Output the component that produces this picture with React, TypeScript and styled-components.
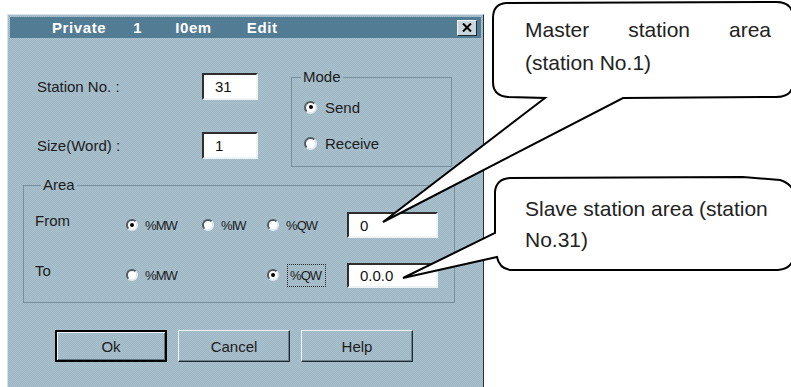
import React from "react";
import styled, { createGlobalStyle, css } from "styled-components";

const GlobalStyle = createGlobalStyle`
  html, body { margin: 0; padding: 0; background: #ffffff; }
  body {
    width: 791px; height: 387px; overflow: hidden;
    font-family: "Liberation Sans", Arial, sans-serif;
  }
`;

const dither = css`
  background-color: #a6bdca;
  background-image: repeating-conic-gradient(#aac1ce 0 25%, #9eb5c3 0 50%);
  background-size: 2px 2px;
`;

const Page = styled.div`
  position: relative;
  width: 791px;
  height: 387px;
  box-sizing: border-box;
  padding: 14px 0 0 7px;
  overflow: hidden;
`;

const Dialog = styled.div`
  width: 477px;
  height: 390px;
  box-sizing: border-box;
  border: 1px solid;
  border-color: #d5e2e9 #23313a #23313a #d5e2e9;
  padding: 2px;
  ${dither};
  display: flex;
  flex-direction: column;
`;

const TitleBar = styled.div`
  height: 21px;
  flex: none;
  background: #527c94;
  display: flex;
  align-items: center;
  padding: 0 4px 0 42px;
  color: #ffffff;
  font-weight: bold;
  font-size: 15px;
  letter-spacing: 0.6px;
`;

const TitleWord = styled.span<{ $gap: number }>`
  margin-left: ${(p) => p.$gap}px;
`;

const CloseButton = styled.div`
  margin-left: auto;
  width: 20px;
  height: 16px;
  box-sizing: border-box;
  background: #c9d6dd;
  border: 1px solid;
  border-color: #f2f6f8 #1e2a31 #1e2a31 #f2f6f8;
  display: flex;
  align-items: center;
  justify-content: center;
`;

const Body = styled.div`
  padding-left: 13px;
  display: flex;
  flex-direction: column;
  color: #1c1c1c;
  font-size: 15px;
`;

const TopSection = styled.div`
  display: flex;
  align-items: flex-start;
  padding-top: 31px;
`;

const Fields = styled.div`
  width: 268px;
  box-sizing: border-box;
  padding: 4px 0 0 14px;
  display: flex;
  flex-direction: column;
  gap: 32px;
`;

const FieldRow = styled.div`
  display: flex;
  align-items: center;
  height: 27px;
`;

const FieldLabel = styled.span`
  width: 165px;
  font-size: 15px;
`;

const TextBox = styled.div<{ $width: number; $height: number }>`
  width: ${(p) => p.$width}px;
  height: ${(p) => p.$height}px;
  box-sizing: border-box;
  background: #ffffff;
  border: 2px solid;
  border-color: #2e2e2e #eef3f6 #eef3f6 #2e2e2e;
  padding-left: 11px;
  display: flex;
  align-items: center;
  font-size: 15px;
  color: #111111;
`;

const Group = styled.fieldset<{ $width: number }>`
  margin: 0;
  width: ${(p) => p.$width}px;
  box-sizing: border-box;
  border: 1px solid #788f9c;
  min-width: 0;
`;

const Legend = styled.legend<{ $offset: number }>`
  padding: 0 2px;
  margin-left: ${(p) => p.$offset}px;
  font-size: 15px;
  line-height: 16px;
`;

const ModeList = styled.div`
  display: flex;
  flex-direction: column;
  gap: 20px;
  padding: 14px 0 15px 12px;
`;

const ModeGroup = styled(Group)`
  padding: 0;
`;

const RadioRow = styled.label<{ $gap: number; $small?: boolean }>`
  display: flex;
  align-items: center;
  gap: ${(p) => p.$gap}px;
  height: 16px;
  font-size: ${(p) => (p.$small ? "13px" : "15px")};
  letter-spacing: ${(p) => (p.$small ? "-0.9px" : "0")};
`;

const RadioCircle = styled.span<{ $checked?: boolean; $size: number }>`
  width: ${(p) => p.$size}px;
  height: ${(p) => p.$size}px;
  flex: none;
  box-sizing: border-box;
  border-radius: 50%;
  background: #ffffff;
  border: 2px solid;
  border-color: #505a60 #e3eaee #e3eaee #505a60;
  display: inline-flex;
  align-items: center;
  justify-content: center;
  &::after {
    content: "";
    width: 4px;
    height: 4px;
    border-radius: 50%;
    background: #000000;
    display: ${(p) => (p.$checked ? "block" : "none")};
  }
`;

const FocusText = styled.span`
  border: 1px dotted #222;
  padding: 3px 4px 3px 2px;
  margin-left: -2px;
`;

const AreaGroup = styled(Group)`
  margin-top: 10px;
  padding: 19px 0 14px 11px;
`;

const AreaGrid = styled.div`
  display: grid;
  grid-template-columns: 91px 76px 65px 80px 91px;
  grid-auto-rows: 26px;
  row-gap: 24px;
  align-items: center;
`;

const RowLabel = styled.span`
  font-size: 15px;
  align-self: start;
`;

const ButtonRow = styled.div`
  display: flex;
  gap: 11px;
  padding-left: 32px;
  margin-top: 27px;
`;

const Button = styled.div<{ $default?: boolean }>`
  width: 112px;
  height: 32px;
  box-sizing: border-box;
  display: flex;
  align-items: center;
  justify-content: center;
  font-size: 15px;
  color: #1c1c1c;
  border: 1px solid;
  border-color: #eef4f7 #1f2a31 #1f2a31 #eef4f7;
  box-shadow: inset -1px -1px 0 #6a808d;
  ${(p) =>
    p.$default &&
    css`
      border: 2px solid #000000;
      box-shadow: inset 1px 1px 0 #eef4f7, inset -1px -1px 0 #5d7380;
    `}
`;

const Overlay = styled.svg`
  position: absolute;
  left: 0;
  top: 0;
  pointer-events: none;
`;

const CalloutText = styled.div<{
  $left: number;
  $top: number;
  $width: number;
  $lineHeight: number;
  $justify?: boolean;
}>`
  position: absolute;
  left: ${(p) => p.$left}px;
  top: ${(p) => p.$top}px;
  width: ${(p) => p.$width}px;
  line-height: ${(p) => p.$lineHeight}px;
  font-size: 21px;
  color: #222222;
  text-align: ${(p) => (p.$justify ? "justify" : "left")};
`;

function Radio({
  label,
  checked,
  small,
  focused,
  size = 12,
  gap = 7,
}: {
  label: string;
  checked?: boolean;
  small?: boolean;
  focused?: boolean;
  size?: number;
  gap?: number;
}) {
  return (
    <RadioRow $gap={gap} $small={small}>
      <RadioCircle $checked={checked} $size={size} />
      {focused ? <FocusText>{label}</FocusText> : <span>{label}</span>}
    </RadioRow>
  );
}

export default function App() {
  return (
    <Page>
      <GlobalStyle />
      <Dialog>
        <TitleBar>
          <TitleWord $gap={0}>Private</TitleWord>
          <TitleWord $gap={27}>1</TitleWord>
          <TitleWord $gap={33}>I0em</TitleWord>
          <TitleWord $gap={35}>Edit</TitleWord>
          <CloseButton>
            <svg width="10" height="9" viewBox="0 0 10 9">
              <path d="M1 0.5 L9 8.5 M9 0.5 L1 8.5" stroke="#000" strokeWidth="2" />
            </svg>
          </CloseButton>
        </TitleBar>
        <Body>
          <TopSection>
            <Fields>
              <FieldRow>
                <FieldLabel>Station No. :</FieldLabel>
                <TextBox $width={56} $height={27}>31</TextBox>
              </FieldRow>
              <FieldRow>
                <FieldLabel>Size(Word) :</FieldLabel>
                <TextBox $width={56} $height={27}>1</TextBox>
              </FieldRow>
            </Fields>
            <ModeGroup $width={161}>
              <Legend $offset={9}>Mode</Legend>
              <ModeList>
                <Radio label="Send" checked size={13} gap={8} />
                <Radio label="Receive" size={13} gap={8} />
              </ModeList>
            </ModeGroup>
          </TopSection>
          <AreaGroup $width={432}>
            <Legend $offset={6}>Area</Legend>
            <AreaGrid>
              <RowLabel>From</RowLabel>
              <Radio label="%MW" checked small />
              <Radio label="%IW" small />
              <Radio label="%QW" small />
              <TextBox $width={91} $height={26}>0</TextBox>
              <RowLabel>To</RowLabel>
              <Radio label="%MW" small />
              <span />
              <Radio label="%QW" checked small focused gap={10} />
              <TextBox $width={91} $height={25}>0.0.0</TextBox>
            </AreaGrid>
          </AreaGroup>
          <ButtonRow>
            <Button $default>Ok</Button>
            <Button>Cancel</Button>
            <Button>Help</Button>
          </ButtonRow>
        </Body>
      </Dialog>

      <Overlay width="791" height="387" viewBox="0 0 791 387">
        <path
          d="M 506 3 L 776 2 Q 792 2 793 16 L 793 84 Q 792 97 776 97 L 623 98 L 383 222 L 545 98 L 508 97 Q 493 96 493 82 L 493 18 Q 493 4 506 3 Z"
          fill="#ffffff"
          stroke="#000000"
          strokeWidth="2"
          strokeLinejoin="miter"
        />
        <path
          d="M 510 178 L 743 177 L 780 180 Q 792 184 793 192 L 793 260 Q 790 269 778 270 L 510 270 Q 499 268 497 257 L 403 278 L 495 233 L 495 192 Q 496 179 510 178 Z"
          fill="#ffffff"
          stroke="#000000"
          strokeWidth="2"
        />
      </Overlay>
      <CalloutText $left={525} $top={13} $width={246} $lineHeight={33} $justify>
        Master station area (station No.1)
      </CalloutText>
      <CalloutText $left={525} $top={193} $width={252} $lineHeight={31}>
        Slave station area (station No.31)
      </CalloutText>
    </Page>
  );
}
